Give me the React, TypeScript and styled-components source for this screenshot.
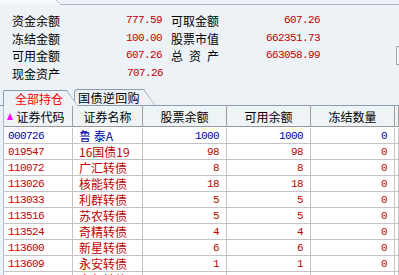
import React from "react";
import styled, { createGlobalStyle } from "styled-components";

const Global = createGlobalStyle`
  html, body { margin: 0; padding: 0; }
  body {
    width: 399px; height: 275px; overflow: hidden;
    background: #ecf2f6;
    font-family: "Noto Sans CJK SC", "Liberation Sans", sans-serif;
    font-size: 12px; color: #000;
  }
`;

const Page = styled.div`
  display: flex; flex-direction: column; width: 399px; height: 275px; overflow: hidden;
`;

const TopStrip = styled.div`
  display: flex; height: 5px; flex: none;
`;

const CutTab = styled.div`
  width: 60px; height: 5px; overflow: hidden; background: #f4f8fa;
  position: relative;
  &::after {
    content: ""; position: absolute; right: -2px; top: 0; width: 6px; height: 5px;
    background: linear-gradient(to top right, transparent calc(50% - 0.7px), #a8b2c2 50%, transparent calc(50% + 0.7px));
  }
`;

const CutTabText = styled.div`
  margin-top: -14px; padding-left: 8px; color: #ff0000; line-height: 16px;
`;

const TopLine = styled.div`
  flex: 1; border-bottom: 1px solid #a9b4c6; height: 4px;
`;

const InfoPanel = styled.div`
  position: relative; flex: none; height: 83px; box-sizing: border-box;
  padding: 7px 0 0 12px;
  display: grid;
  grid-template-columns: 60px 90px 57px 101px;
  grid-auto-rows: 17.5px;
  align-content: start;
`;

const Label = styled.div<{ $second?: boolean }>`
  line-height: 17.5px; white-space: pre; color: #000;
  padding-left: ${(p) => (p.$second ? "9px" : "0")};
`;

const Value = styled.div<{ $nudge?: number }>`
  font-family: "Liberation Mono", monospace; font-size: 11px; letter-spacing: -0.6px;
  color: #c00000; line-height: 17.5px; text-align: right; white-space: pre;
  margin-right: ${(p) => -(p.$nudge || 0)}px;
`;

const ScrollNub = styled.div`
  position: absolute; left: 396px; top: 41px; width: 8px; height: 19px;
  border: 1px solid #a6a6a6; background: #f2f4f6; box-sizing: border-box;
`;

const TabStrip = styled.div`
  display: flex; align-items: flex-end; height: 17px; flex: none;
  border-bottom: 1px solid #8d9bb0; padding-left: 3px;
`;

const Tab = styled.div<{ $active?: boolean; $first?: boolean }>`
  position: relative; height: 15px; line-height: 15px;
  margin-bottom: ${(p) => (p.$active ? "-1px" : "0")};
  padding: 0 15px 0 ${(p) => (p.$first ? "11px" : "3px")};
  margin-left: ${(p) => (p.$first ? "0" : "-4px")};
  letter-spacing: ${(p) => (p.$first ? "0" : "0.4px")};
  border-top: 1px solid #8d9bb0;
  border-left: 1px solid #8d9bb0;
  border-top-left-radius: ${(p) => (p.$first ? "2px" : "4px")};
  background: #ecf2f6;
  color: ${(p) => (p.$active ? "#ff0000" : "#000")};
  z-index: ${(p) => (p.$active ? 2 : 1)};
  clip-path: polygon(0 0, calc(100% - 11px) 0, 100% 100%, 0 100%);
  &::after {
    content: ""; position: absolute; right: 0; top: 0; width: 11px; height: 100%;
    background: linear-gradient(to top right, transparent calc(50% - 0.8px), #98a4b6 50%, transparent calc(50% + 0.8px));
  }
`;

const Table = styled.div`
  display: flex; flex-direction: column; margin-left: 3px;
  border-left: 1px solid #b2b8de; flex: 1; background: #fff;
`;

const COLS = "69px 70px 84px 84px 84px 1fr";

const HeaderRow = styled.div`
  display: grid; grid-template-columns: ${COLS}; height: 21px; box-sizing: border-box;
  background: #eef3f6; border-bottom: 1px solid #999;
`;

const HeadCell = styled.div`
  display: flex; align-items: center; justify-content: center; gap: 2px;
  border-right: 1px solid #9c9c9c; line-height: 21px; white-space: nowrap;
`;

const SortMark = styled.span`
  width: 0; height: 0; border-left: 3px solid transparent; border-right: 3px solid transparent;
  border-bottom: 7px solid #ff00ff; margin-left: -4px; margin-right: 1px;
`;

const Body = styled.div`
  display: flex; flex-direction: column; padding-top: 1px;
`;

const Row = styled.div<{ $blue?: boolean }>`
  display: grid; grid-template-columns: ${COLS}; height: 16px; box-sizing: border-box;
  border-bottom: 1px solid #c4c4c4; color: ${(p) => (p.$blue ? "#0000a8" : "#c00000")};
`;

const Cell = styled.div<{ $align?: "left" | "right"; $mono?: boolean; $pad?: number }>`
  border-right: 1px solid #c4c4c4; overflow: hidden; white-space: pre;
  text-align: ${(p) => p.$align || "left"};
  padding: ${(p) => (p.$mono ? 2 : 1)}px ${(p) => (p.$align === "right" ? 7 : 0)}px 0 ${(p) => p.$pad ?? 0}px;
  font-family: ${(p) => (p.$mono ? '"Liberation Mono", monospace' : '"Noto Sans CJK SC", sans-serif')};
  font-size: ${(p) => (p.$mono ? "11px" : "12px")};
  letter-spacing: ${(p) => (p.$mono ? "-0.6px" : "0")};
  line-height: ${(p) => (p.$mono ? "13px" : "14px")};
`;

const info = [
  ["资金余额", "777.59", "可取金额", "607.26"],
  ["冻结金额", "100.00", "股票市值", "662351.73"],
  ["可用金额", "607.26", "总\u2002资\u2002产", "663058.99"],
  ["现金资产", "707.26", "", ""],
];

const rows = [
  ["000726", "鲁 泰A", "1000", "1000", "0"],
  ["019547", "16国债19", "98", "98", "0"],
  ["110072", "广汇转债", "8", "8", "0"],
  ["113026", "核能转债", "18", "18", "0"],
  ["113033", "利群转债", "5", "5", "0"],
  ["113516", "苏农转债", "5", "5", "0"],
  ["113524", "奇精转债", "4", "4", "0"],
  ["113600", "新星转债", "6", "6", "0"],
  ["113609", "永安转债", "1", "1", "0"],
  ["113616", "韦尔转债", "1", "1", "0"],
];

export default function App() {
  return (
    <Page>
      <Global />
      <TopStrip>
        <CutTab>
          <CutTabText>资金股份</CutTabText>
        </CutTab>
        <TopLine />
      </TopStrip>
      <InfoPanel>
        {info.map((r, i) => (
          <React.Fragment key={i}>
            <Label>{r[0]}</Label>
            <Value $nudge={i === 3 ? 1 : 0}>{r[1]}</Value>
            <Label $second>{r[2]}</Label>
            <Value>{r[3]}</Value>
          </React.Fragment>
        ))}
        <ScrollNub />
      </InfoPanel>
      <TabStrip>
        <Tab $active $first>全部持仓</Tab>
        <Tab>国债逆回购</Tab>
      </TabStrip>
      <Table>
        <HeaderRow>
          <HeadCell>
            <SortMark />
            证券代码
          </HeadCell>
          <HeadCell>证券名称</HeadCell>
          <HeadCell>股票余额</HeadCell>
          <HeadCell>可用余额</HeadCell>
          <HeadCell>冻结数量</HeadCell>
          <HeadCell />
        </HeaderRow>
        <Body>
          {rows.map((r, i) => (
            <Row key={r[0]} $blue={i === 0}>
              <Cell $mono $pad={4}>{r[0]}</Cell>
              <Cell $pad={6}>{r[1]}</Cell>
              <Cell $mono $align="right">{r[2]}</Cell>
              <Cell $mono $align="right">{r[3]}</Cell>
              <Cell $mono $align="right">{r[4]}</Cell>
              <Cell />
            </Row>
          ))}
        </Body>
      </Table>
    </Page>
  );
}
